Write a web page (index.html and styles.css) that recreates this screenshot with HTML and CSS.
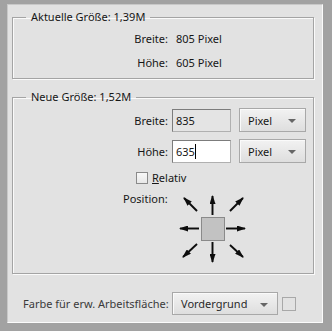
FILE: index.html
```html
<!DOCTYPE html>
<html lang="de">
  <head>
    <meta charset="UTF-8" />
    <meta name="viewport" content="width=device-width, initial-scale=1.0" />
    <title>Arbeitsfläche</title>
    <link rel="stylesheet" href="styles.css">
  </head>
  <body>
    <div class="panel">
      <fieldset class="group group_cur">
        <legend>Aktuelle Größe: 1,39M</legend>
        <div class="row">
          <span class="lbl">Breite:</span>
          <span class="val">805 Pixel</span>
        </div>
        <div class="row">
          <span class="lbl">Höhe:</span>
          <span class="val">605 Pixel</span>
        </div>
      </fieldset>
      <fieldset class="group group_new">
        <legend>Neue Größe: 1,52M</legend>
        <div class="row row_in">
          <span class="lbl">Breite:</span>
          <span class="input">835</span>
          <span class="select sel_unit">Pixel<i class="tri"></i></span>
        </div>
        <div class="row row_in">
          <span class="lbl">Höhe:</span>
          <span class="input on">635<i class="caret"></i></span>
          <span class="select sel_unit">Pixel<i class="tri"></i></span>
        </div>
        <label class="check">
          <span class="box"></span>
          <span><u>R</u>elativ</span>
        </label>
        <div class="pos">
          <span class="pos_lbl">Position:</span>
          <svg class="anchor" width="72" height="72" viewBox="0 0 72 72">
            <defs>
              <marker id="head" markerWidth="9" markerHeight="6" refX="8" refY="3" orient="auto" markerUnits="userSpaceOnUse">
                <path d="M0 0 L9 3 L0 6 Z" fill="#0c0c0c" />
              </marker>
              <filter id="soft" x="-20%" y="-20%" width="140%" height="140%">
                <feGaussianBlur stdDeviation="0.4" />
              </filter>
            </defs>
            <g stroke="#0c0c0c" stroke-width="1.9" marker-end="url(#head)" filter="url(#soft)">
              <line x1="34.5" y1="21" x2="34.5" y2="2" />
              <line x1="34.5" y1="48" x2="34.5" y2="68" />
              <line x1="21" y1="34.5" x2="2" y2="34.5" />
              <line x1="48" y1="34.5" x2="67" y2="34.5" />
              <line x1="19" y1="17" x2="6" y2="4" />
              <line x1="52" y1="17" x2="65" y2="4" />
              <line x1="19" y1="50" x2="5" y2="63" />
              <line x1="52" y1="51" x2="65" y2="63" />
            </g>
            <rect x="23.5" y="23.5" width="23" height="23" fill="#c2c2c2" stroke="#8a8a8a" />
          </svg>
        </div>
      </fieldset>
      <div class="canvas_row">
        <span class="canvas_lbl">Farbe für erw. Arbeitsfläche:</span>
        <span class="select sel_color">Vordergrund<i class="tri"></i></span>
        <span class="swatch"></span>
      </div>
    </div>
  </body>
</html>
```

FILE: styles.css
```css
* {
  margin: 0;
  padding: 0;
  box-sizing: border-box;
}
html,
body {
  width: 332px;
  height: 331px;
  overflow: hidden;
}
body {
  background-color: #a2a2a2;
  font-family: "Noto Sans", "Open Sans", sans-serif;
  font-size: 11px;
  color: #161616;
  padding: 4px 9px 8px 7px;
}
.panel {
  height: 100%;
  background-color: #e2e2e2;
  border-right: 1px solid #fbfbfb;
  border-bottom: 1px solid #fbfbfb;
  border-top: 1px solid #c8c8c8;
  border-left: 1px solid #c8c8c8;
  padding: 4px 8px 0 4px;
}
.group {
  border: 1px solid #a4a4a4;
  box-shadow: 1px 1px 0 #fafafa, inset 1px 1px 0 #fafafa;
  padding: 0;
  min-width: 0;
}
.group legend {
  margin-left: 13px;
  padding: 0 5px;
  line-height: 16px;
}
.group_cur {
  height: 70px;
  padding-top: 1px;
}
.group_cur .row {
  height: 24px;
}
.row {
  display: flex;
  align-items: center;
  gap: 8px;
  white-space: nowrap;
}
.lbl {
  width: 155px;
  text-align: right;
}
.group_new {
  margin-top: 10px;
  height: 185px;
}
.row_in {
  height: 30px;
  gap: 4px;
}
.row_in + .row_in {
  margin-top: 1px;
}
.input {
  width: 59px;
  height: 23px;
  margin-right: 4px;
  border: 1px solid #7c7c7c;
  border-right-color: #b0b0b0;
  border-bottom-color: #b0b0b0;
  background-color: #e4e4e4;
  padding-left: 3px;
  display: flex;
  align-items: center;
}
.input.on {
  background-color: #fff;
}
.caret {
  display: inline-block;
  width: 1px;
  height: 15px;
  background-color: #000;
}
.select {
  position: relative;
  display: flex;
  align-items: center;
  height: 24px;
  border: 1px solid #a8a8a8;
  background: linear-gradient(#f2f2f2, #dedede);
  padding-left: 8px;
  box-shadow: inset 1px 1px 0 #fafafa;
}
.sel_unit {
  width: 67px;
}
.tri {
  position: absolute;
  right: 9px;
  top: 10px;
  border-left: 4px solid transparent;
  border-right: 4px solid transparent;
  border-top: 4px solid #666;
}
.check {
  display: flex;
  align-items: center;
  gap: 4px;
  margin: 4px 0 0 123px;
  line-height: 16px;
}
.box {
  width: 12px;
  height: 12px;
  border: 1px solid #8a8a8a;
  background: linear-gradient(#f8f8f8, #e8e8e8);
}
.pos {
  display: flex;
  align-items: flex-start;
  margin: 5px 0 0 110px;
}
.pos_lbl {
  width: 55px;
  line-height: 16px;
}
.anchor {
  display: block;
  margin-top: 3px;
}
.canvas_row {
  display: flex;
  align-items: center;
  margin: 18px 0 0 11px;
  color: #3a3a3a;
  white-space: nowrap;
}
.canvas_lbl {
  width: 149px;
}
.sel_color {
  width: 106px;
  height: 23px;
  color: #2a2a2a;
}
.swatch {
  width: 14px;
  height: 14px;
  margin-left: 4px;
  border: 1px solid #a8a8a8;
}
```
